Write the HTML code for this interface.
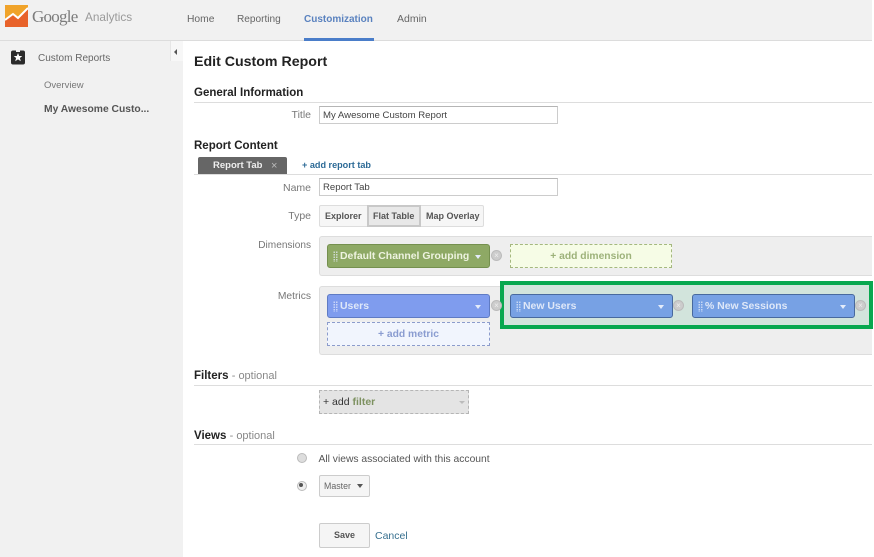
<!DOCTYPE html>
<html>
<head>
<meta charset="utf-8">
<style>
html,body{margin:0;padding:0;width:874px;height:557px;overflow:hidden;background:#fff}
body{position:relative;font-family:"Liberation Sans",sans-serif;font-size:11px;color:#444}
.a,.t{position:absolute;white-space:nowrap}
.t{line-height:14px}
.r{text-align:right;width:120px;left:191px;color:#777}
.h{font-weight:bold;color:#222;font-size:11.5px}
.opt{font-weight:normal;color:#888;font-size:11px}
.line{position:absolute;left:194px;width:678px;height:1px;background:#ddd}
.inp{position:absolute;left:319px;width:234px;height:16px;border:1px solid #ccc;border-top-color:#b5b5b5;padding-left:3px;line-height:17px;font-size:9.6px;color:#444;background:#fff}
.panel{position:absolute;left:319px;width:553px;background:#eee;border:1px solid #ddd;border-right:none;border-radius:3px 0 0 3px;box-sizing:border-box}
.pill{position:absolute;width:163px;height:24px;box-sizing:border-box;border-radius:3px;font-weight:bold;font-size:10.45px;line-height:24px;color:#dfe8f8;padding-left:12px;white-space:nowrap}
.pill:before{content:"";position:absolute;left:5px;top:6px;width:5px;height:11px;background-image:radial-gradient(circle,#e8eefc 0.8px,transparent 0.9px);background-size:2.5px 2.5px;opacity:.7}
.pill:after{content:"";position:absolute;right:8px;top:10px;border:3.5px solid transparent;border-top:4px solid #e4ecfa;border-bottom:none}
.g{background:#8ea965;border:1px solid #75904f;color:#eef3e0}
.b1{background:#7f9cee;border:1px solid #5f7bc4}
.b2{background:#77a1e4;border:1px solid #48699e}
.x{position:absolute;width:9px;height:9px;border-radius:50%;background:#ccc;border:1px solid #bbb;box-sizing:content-box;color:#eee;font-size:8px;line-height:9px;text-align:center}
.dash{position:absolute;box-sizing:border-box;border:1px dashed #aaa;text-align:center;font-weight:bold;font-size:10.3px}
</style>
</head>
<body>
<div class="a" style="left:0;top:0;width:872px;height:40px;background:#f1f1f1;border-bottom:1px solid #dcdcdc"></div>
<div class="a" style="left:0;top:41px;width:183px;height:516px;background:#f1f1f1"></div>

<svg class="a" style="left:5px;top:5px" width="23" height="22" viewBox="0 0 23 22">
<rect width="23" height="22" fill="#f0a32a"/>
<path d="M0 22V15L8 9L13 13L23 3V22Z" fill="#e8622a"/>
<path d="M0 15L8 9L13 13L23 3" fill="none" stroke="#fff" stroke-width="2"/>
</svg>
<div class="a" style="left:32px;top:5px;font-family:'Liberation Serif',serif;font-size:17px;line-height:24px;color:#7c7c7c;letter-spacing:-.75px">Google</div>
<div class="a" style="left:85px;top:8px;font-size:11.8px;line-height:18px;color:#9a9a9a">Analytics</div>

<div class="t" style="left:187px;top:13px;font-size:10.3px;color:#666">Home</div>
<div class="t" style="left:237px;top:13px;font-size:10.1px;color:#666">Reporting</div>
<div class="t" style="left:304px;top:13px;font-size:10px;font-weight:bold;color:#5a82bf">Customization</div>
<div class="t" style="left:397px;top:12px;font-size:10.5px;color:#666">Admin</div>
<div class="a" style="left:304px;top:38px;width:70px;height:3px;background:#4a7dc9"></div>

<svg class="a" style="left:11px;top:50px" width="15" height="15" viewBox="0 0 15 15">
<rect x="0" y="0.5" width="14" height="14" rx="2" fill="#2b2b2b"/>
<rect x="5" y="0" width="4" height="2" fill="#f1f1f1"/>
<path d="M7 3L8.2 6H11.3L8.9 8L9.8 11.2L7 9.4L4.2 11.2L5.1 8L2.7 6H5.8Z" fill="#fff"/>
</svg>
<div class="t" style="left:38px;top:52px;font-size:10px;color:#666">Custom Reports</div>
<div class="t" style="left:44px;top:79px;font-size:9.5px;color:#777">Overview</div>
<div class="t" style="left:44px;top:103px;font-size:10.3px;font-weight:bold;color:#555">My Awesome Custo...</div>
<div class="a" style="left:170px;top:41px;width:12px;height:20px;background:#f7f7f7;border-left:1px solid #e6e6e6"></div>
<div class="a" style="left:174px;top:49px;border:3px solid transparent;border-right:3px solid #555;border-left:none"></div>

<div class="t" style="left:194px;top:54px;font-size:14.2px;line-height:16px;font-weight:bold;color:#222">Edit Custom Report</div>

<div class="t h" style="left:194px;top:86px">General Information</div>
<div class="line" style="top:102px"></div>
<div class="t r" style="top:108px;font-size:10.5px">Title</div>
<div class="inp" style="top:106px">My Awesome Custom Report</div>

<div class="t h" style="left:194px;top:139px">Report Content</div>
<div class="a" style="left:198px;top:157px;width:89px;height:17px;background:#666;border-radius:2px 2px 0 0;color:#eee;font-weight:bold;font-size:9.5px;line-height:18px;text-indent:15px">Report Tab<span style="position:absolute;left:73px;top:0;text-indent:0;color:#bbb;font-weight:normal;font-size:11px">×</span></div>
<div class="t" style="left:302px;top:158px;font-size:9.1px;font-weight:bold;color:#2c6a96">+ add report tab</div>
<div class="line" style="top:174px"></div>
<div class="t r" style="top:181px;font-size:10.5px">Name</div>
<div class="inp" style="top:178px">Report Tab</div>

<div class="t r" style="top:209px;font-size:10.5px">Type</div>
<div class="a" style="left:319px;top:205px;width:165px;height:22px;box-sizing:border-box;border:1px solid #ddd;border-radius:2px;background:#f6f6f6"></div>
<div class="a" style="left:367px;top:205px;width:54px;height:22px;box-sizing:border-box;border:2px solid #c8c8c8;background:#e8e8e8"></div>
<div class="t" style="left:325px;top:209px;font-size:9px;font-weight:bold;color:#555">Explorer</div>
<div class="t" style="left:373px;top:209px;font-size:9px;font-weight:bold;color:#555">Flat Table</div>
<div class="t" style="left:426px;top:209px;font-size:9px;font-weight:bold;color:#555">Map Overlay</div>

<div class="t r" style="top:239px;font-size:10.1px">Dimensions</div>
<div class="panel" style="top:236px;height:40px"></div>
<div class="pill g" style="left:327px;top:244px">Default Channel Grouping</div>
<div class="x" style="left:491px;top:250px">×</div>
<div class="dash" style="left:510px;top:244px;width:162px;height:24px;background:#f6fce6;border-color:#a5b87f;color:#9db27a;line-height:24px">+ add dimension</div>

<div class="t r" style="top:290px;font-size:10.3px">Metrics</div>
<div class="panel" style="top:286px;height:69px"></div>
<div class="a" style="left:500px;top:281px;width:373px;height:48px;box-sizing:border-box;background:#d2e4dc;border:4px solid #07a84f"></div>
<div class="pill b1" style="left:327px;top:294px">Users</div>
<div class="x" style="left:491px;top:300px">×</div>
<div class="pill b2" style="left:510px;top:294px">New Users</div>
<div class="x" style="left:673px;top:300px">×</div>
<div class="pill b2" style="left:692px;top:294px">% New Sessions</div>
<div class="x" style="left:855px;top:300px">×</div>
<div class="dash" style="left:327px;top:322px;width:163px;height:24px;background:#f1f5fd;border-color:#8c9ccc;color:#8a9cd0;line-height:24px">+ add metric</div>

<div class="t h" style="left:194px;top:369px">Filters <span class="opt">- optional</span></div>
<div class="line" style="top:385px"></div>
<div class="dash" style="left:319px;top:390px;width:150px;height:24px;background:#e4e4e4;border-color:#b5b5b5;text-align:left;padding-left:3px;line-height:22px;font-weight:normal;font-size:10.5px;color:#333">+ add <b style="color:#7d9160">filter</b><span style="position:absolute;right:3px;top:10px;border:3px solid transparent;border-top:3px solid #bbb;border-bottom:none"></span></div>

<div class="t h" style="left:194px;top:429px">Views <span class="opt">- optional</span></div>
<div class="line" style="top:444px"></div>
<div class="a" style="left:297px;top:453px;width:8px;height:8px;border-radius:50%;background:#ddd;border:1px solid #bbb"></div>
<div class="t" style="left:318.5px;top:453px;font-size:10.3px;color:#555">All views associated with this account</div>
<div class="a" style="left:297px;top:481px;width:8px;height:8px;border-radius:50%;background:#eee;border:1px solid #bbb"></div>
<div class="a" style="left:299px;top:483px;width:4px;height:4px;border-radius:50%;background:#555"></div>
<div class="a" style="left:319px;top:475px;width:51px;height:22px;box-sizing:border-box;border:1px solid #ccc;border-radius:2px;background:#f5f5f5;color:#666;font-size:8.8px;line-height:21px;padding-left:4px">Master<span style="position:absolute;right:6px;top:8px;border:3.5px solid transparent;border-top:4px solid #555;border-bottom:none"></span></div>
<div class="a" style="left:319px;top:523px;width:51px;height:25px;box-sizing:border-box;border:1px solid #ccc;border-radius:2px;background:#f5f5f5;color:#555;font-size:9px;font-weight:bold;line-height:23px;text-align:center">Save</div>
<div class="t" style="left:375px;top:529px;font-size:10.5px;color:#37708f">Cancel</div>
</body>
</html>
